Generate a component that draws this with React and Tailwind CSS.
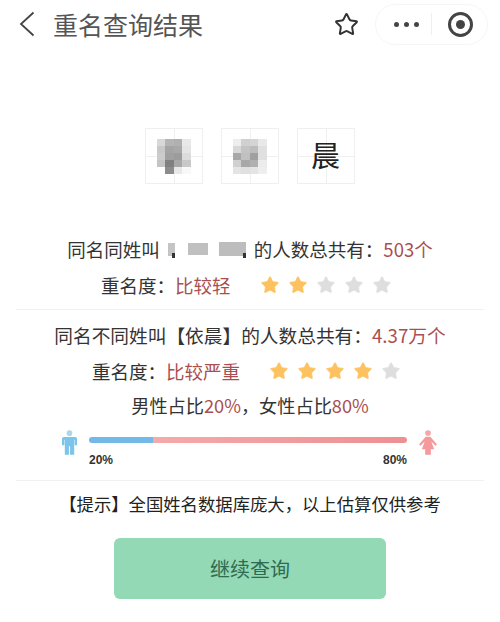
import { Star } from 'lucide-react';

const font = { fontFamily: '"Noto Sans CJK SC", "Liberation Sans", sans-serif' };

const mosaicA = [
    ['#d8d8d8', '#b4b4b4', '#b0b0b0', '#e8e8e8'],
    ['#c8c8c8', '#a4a4a4', '#a8a8a8', '#e4e4e4'],
    ['#cccccc', '#a0a0a0', '#9c9c9c', '#dcdcdc'],
    ['#c4c4c4', '#808080', '#a8a8a8', '#c8c8c8'],
    ['#ffffff', '#8c8c8c', '#e8e8e8', '#f8f8f8'],
];

const mosaicB = [
    ['#eeeeee', '#d0d0d0', '#d4d4d4', '#e8e8e8'],
    ['#d8d8d8', '#c4c4c4', '#bcbcbc', '#e0e0e0'],
    ['#a8a8a8', '#c0c0c0', '#a0a0a0', '#e0e0e0'],
    ['#d0d0d0', '#a8a8a8', '#b0b0b0', '#ececec'],
    ['#e4e4e4', '#e0e0e0', '#e4e4e4', '#eeeeee'],
];

// 田字格 background lines
function Tile({ children }) {
    return (
        <div className="relative flex h-[56px] w-[58px] items-center justify-center border border-[#efefef]">
            <div className="absolute left-1/2 top-0 h-full w-px bg-[#f0f0f0]" />
            <div className="absolute left-0 top-1/2 h-px w-full bg-[#f0f0f0]" />
            <div className="relative">{children}</div>
        </div>
    );
}

function Mosaic({ cells }) {
    return (
        <div className="grid grid-cols-4">
            {cells.flat().map((color, i) => (
                <div key={i} className="h-[7px] w-[8.5px]" style={{ backgroundColor: color }} />
            ))}
        </div>
    );
}

function Stars({ count }) {
    return (
        <div className="flex gap-[8px]">
            {[0, 1, 2, 3, 4].map((i) => (
                <Star
                    key={i}
                    size={20}
                    strokeWidth={1}
                    className={i < count ? 'fill-[#fcc25f] text-[#fcc25f]' : 'fill-[#dedede] text-[#dedede]'}
                />
            ))}
        </div>
    );
}

function Male() {
    return (
        <svg width="15" height="25" viewBox="0 0 16 26" className="fill-[#7cc4ea]">
            <circle cx="8" cy="3" r="3" fill="#a8d8ec" />
            <path d="M2 7h12a2 2 0 0 1 2 2v7h-2.500v-6h-.5v16H8.600v-9H7.400v9H3V10h-.5v6H0V9a2 2 0 0 1 2-2z" />
        </svg>
    );
}

function Female() {
    return (
        <svg width="18" height="25" viewBox="0 0 19 26" className="fill-[#f49a9c]">
            <circle cx="9.500" cy="3" r="3" fill="#f2a8aa" />
            <path d="M7 7h5l7 8-1.600 1.400L13 12l3 8h-3.500v6h-6v-6H3l3-8-4.400 4.400L0 15z" />
        </svg>
    );
}

export default function App() {
    return (
        <div className="h-[622px] w-[500px] overflow-hidden bg-white text-[#333]" style={font}>
            {/* Nav bar */}
            <div className="flex h-[48px] items-center pl-[19px] pr-[12px]">
                <svg width="16" height="26" viewBox="0 0 16 26" fill="none" className="stroke-[#444]">
                    <path d="M14.500 1.500 2 13l12.500 11.500" strokeWidth="1.800" />
                </svg>
                <span className="ml-[18px] text-[25px] leading-none text-[#555]">重名查询结果</span>
                <Star size={25} strokeWidth={1.9} className="ml-auto text-[#333]" />
                <div className="ml-[16px] flex h-[41px] w-[113px] items-center rounded-full border border-[#f6f6f6]">
                    <div className="ml-[18px] flex gap-[5px]">
                        <span className="h-[5px] w-[5px] rounded-full bg-[#444]" />
                        <span className="h-[5px] w-[5px] rounded-full bg-[#444]" />
                        <span className="h-[5px] w-[5px] rounded-full bg-[#444]" />
                    </div>
                    <div className="ml-[12px] h-[22px] w-px bg-[#eeeeee]" />
                    <div className="ml-[16px] flex h-[25px] w-[25px] items-center justify-center rounded-full border-[3px] border-[#444]">
                        <span className="h-[9px] w-[9px] rounded-full bg-[#444]" />
                    </div>
                </div>
            </div>

            {/* Name tiles */}
            <div className="mt-[80px] flex justify-center gap-[18px] pr-[1px]">
                <Tile><Mosaic cells={mosaicA} /></Tile>
                <Tile><Mosaic cells={mosaicB} /></Tile>
                <Tile><span className="text-[29px] leading-none text-[#222]">晨</span></Tile>
            </div>

            {/* Same surname */}
            <div className="mt-[51px] flex h-[28px] items-center justify-center text-[18.500px] leading-none">
                <span>同名同姓叫</span>
                <div className="relative mx-[8px] flex h-[19px] w-[78px] items-center">
                    <div className="h-[13px] w-[7px] bg-[#c4c4c4]" />
                    <div className="ml-[13px] h-[12px] w-[20px] bg-[#c0c0c0]" />
                    <div className="ml-[11px] h-[14px] w-[27px] bg-[#bdbdbd]" />
                    <div className="absolute bottom-[1px] left-[4px] h-[5px] w-[3px] bg-[#333]" />
                    <div className="absolute bottom-[1px] right-0 h-[5px] w-[3px] bg-[#333]" />
                </div>
                <span>的人数总共有：</span>
                <span className="text-[#a94f50]">503个</span>
            </div>
            <div className="mt-[8px] flex h-[28px] items-center pl-[101px] text-[18.500px] leading-none">
                <span>重名度：</span>
                <span className="text-[#a94f50]">比较轻</span>
                <div className="ml-[29px]"><Stars count={2} /></div>
            </div>

            <div className="mx-[16px] mt-[10px] h-px bg-[#f0f0f0]" />

            {/* Different surname */}
            <div className="mt-[11px] flex h-[28px] items-center justify-center text-[18.700px] leading-none">
                <span>同名不同姓叫【依晨】的人数总共有：</span>
                <span className="text-[#a94f50]">4.37万个</span>
            </div>
            <div className="mt-[8px] flex h-[28px] items-center pl-[92px] text-[18.500px] leading-none">
                <span>重名度：</span>
                <span className="text-[#a94f50]">比较严重</span>
                <div className="ml-[29px]"><Stars count={4} /></div>
            </div>
            <div className="mt-[6px] flex h-[28px] items-center justify-center text-[18.200px] leading-none">
                <span>男性占比</span>
                <span className="text-[#a94f50]">20%</span>
                <span>，女性占比</span>
                <span className="text-[#a94f50]">80%</span>
            </div>

            {/* Gender bar */}
            <div className="mt-[11px] flex items-start pl-[62px]">
                <Male />
                <div className="ml-[12px] w-[318px]">
                    <div className="mt-[7px] flex h-[6px] overflow-hidden rounded-full">
                        <div className="w-1/5 bg-[#72b9e8]" />
                        <div className="flex-1 bg-gradient-to-r from-[#f5aaa8] to-[#ee8f92]" />
                    </div>
                    <div className="mt-[9px] flex justify-between text-[12px] font-bold leading-[16px] text-[#333]" style={{ fontFamily: '"Liberation Sans", sans-serif' }}>
                        <span>20%</span>
                        <span>80%</span>
                    </div>
                </div>
                <div className="ml-[12px]"><Female /></div>
            </div>

            <div className="mx-[16px] mt-[12px] h-px bg-[#f0f0f0]" />

            {/* Tip */}
            <div className="mt-[9px] flex h-[28px] items-center justify-center text-[17.350px] leading-none text-[#222]">
                【提示】全国姓名数据库庞大，以上估算仅供参考
            </div>

            <button className="mx-auto mt-[20px] flex h-[61px] w-[272px] items-center justify-center rounded-[6px] bg-[#93d9b5] text-[20px] text-[#2f6b50]">
                继续查询
            </button>
        </div>
    );
}
